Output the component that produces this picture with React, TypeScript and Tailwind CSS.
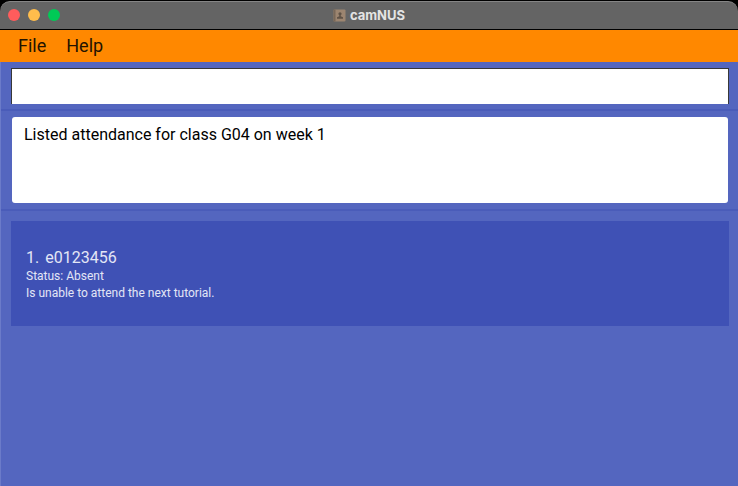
const attendance = [
  { id: 1, student: "e0123456", status: "Absent", note: "Is unable to attend the next tutorial." },
];

function TitleBar() {
  return (
    <header className="grid h-[29px] grid-cols-[1fr_auto_1fr] items-center rounded-t-[10px] border-t border-b border-t-[#858585] border-b-black bg-[#646464] px-2 pb-px">
      <div className="flex gap-2">
        <button type="button" aria-label="Close" className="size-3 rounded-full bg-[#ff5c5c]" />
        <button type="button" aria-label="Minimize" className="size-3 rounded-full bg-[#ffbd4c]" />
        <button type="button" aria-label="Zoom" className="size-3 rounded-full bg-[#00ca56]" />
      </div>
      <div className="flex items-center justify-center gap-1">
        <svg viewBox="0 0 13 13" className="size-[13px]" aria-hidden="true">
          <rect x="0.500" y="0.500" width="12" height="12" rx="1" fill="#9c8570" />
          <rect x="0.500" y="0.500" width="2" height="12" fill="#796858" />
          <circle cx="7" cy="4.800" r="1.600" fill="#5f5246" />
          <path d="M6.300 6h1.400v1.300l2.300.9v1.500H4V8.200l2.300-.9z" fill="#5f5246" />
        </svg>
        <h1 className="font-[Inter,sans-serif] text-[13px] leading-[14px] font-bold text-[#e4e4e4]">camNUS</h1>
      </div>
    </header>
  );
}

export default function App() {
  return (
    <div className="min-h-screen bg-black pt-px font-[Roboto,sans-serif]">
      <TitleBar />
      <div className="flex min-h-[calc(100vh-30px)] flex-col border-l border-[#6b7bc9] bg-[#5466bf]">
        <nav className="-ml-px flex h-8 items-center gap-5 bg-[#ff8800] px-[18px] text-lg text-[#241300]">
          <button type="button">File</button>
          <button type="button">Help</button>
        </nav>
        <div className="flex border-b-2 border-[#4a5cb9] pt-[6px] pr-[9px] pb-[5px] pl-[10px]">
          <input
            type="text"
            aria-label="Command"
            className="h-9 w-full border border-b-0 border-[#383838] bg-white px-3 text-base text-black outline-none"
          />
        </div>
        <div className="flex border-b-2 border-[#4a5cb9] py-[6px] pr-[10px] pl-[11px]">
          <textarea
            readOnly
            aria-label="Result"
            className="h-[86px] w-full resize-none rounded-[3px] bg-white px-3 py-[6px] text-base leading-6 text-black outline-none"
            defaultValue="Listed attendance for class G04 on week 1"
          />
        </div>
        <ul className="pt-[10px] pr-[9px] pl-[10px] text-[#e3e6f5]">
          {attendance.map((entry) => (
            <li key={entry.id} className="bg-[#3f51b5] px-[15px] pt-[27px] pb-6">
              <h2 className="flex gap-[6px] text-base leading-5">
                <span>{entry.id}.</span>
                <span>{entry.student}</span>
              </h2>
              <p className="text-xs leading-[17px]">Status: {entry.status}</p>
              <p className="text-xs leading-[17px]">{entry.note}</p>
            </li>
          ))}
        </ul>
      </div>
    </div>
  );
}
